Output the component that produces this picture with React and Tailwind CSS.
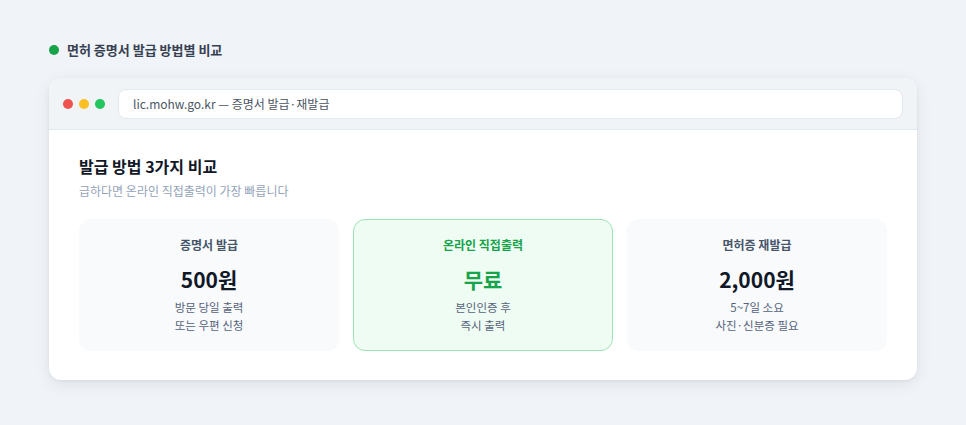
export default function App() {
  const font = { fontFamily: '"Noto Sans CJK KR", "Noto Sans", sans-serif' };
  return (
    <div className="min-h-[425px] w-[966px] bg-[#f0f3f7] px-[49px] pt-[40px] pb-[45px]" style={font}>
      <div className="flex h-[20px] items-center gap-[8px]">
        <span className="h-[10px] w-[10px] rounded-full bg-[#16a34a]" />
        <span className="text-[13px] font-bold text-[#374151]">면허 증명서 발급 방법별 비교</span>
      </div>
      <div className="mt-[18px] overflow-hidden rounded-[12px] bg-white shadow-[0_4px_16px_rgba(15,23,42,0.08),0_1px_3px_rgba(15,23,42,0.06)]">
        <div className="flex h-[52px] items-center border-b border-[#e2e8f0] bg-[#f1f4f7] pl-[14px] pr-[14px]">
          <div className="flex gap-[6px]">
            <span className="h-[10px] w-[10px] rounded-full bg-[#ef5350]" />
            <span className="h-[10px] w-[10px] rounded-full bg-[#fbbf24]" />
            <span className="h-[10px] w-[10px] rounded-full bg-[#22c55e]" />
          </div>
          <div className="ml-[13px] flex h-[30px] flex-1 items-center rounded-[8px] border border-[#e2e8f0] bg-white pl-[14px] text-[12px] text-[#4b5563]">
            lic.mohw.go.kr — 증명서 발급·재발급
          </div>
        </div>
        <div className="px-[30px] pt-[24px] pb-[29px]">
          <div className="text-[16px] font-bold leading-[24px] text-[#111827]">발급 방법 3가지 비교</div>
          <div className="mt-[4px] text-[12px] leading-[18px] text-[#94a3b8]">급하다면 온라인 직접출력이 가장 빠릅니다</div>
          <div className="mt-[19px] grid grid-cols-3 gap-[14px]">
            <div className="flex h-[132px] flex-col items-center justify-center rounded-[12px] bg-[#f8fafc]">
              <div className="text-[12px] font-semibold leading-[18px] text-[#475569]">증명서 발급</div>
              <div className="mt-[11px] text-[21px] font-bold leading-[28px] text-[#111827]">500원</div>
              <div className="mt-[5px] text-center text-[11.5px] leading-[18px] text-[#55627a]">방문 당일 출력<br />또는 우편 신청</div>
            </div>
            <div className="flex h-[132px] flex-col items-center justify-center rounded-[12px] border border-[#9de3b3] bg-[#effcf3]">
              <div className="text-[12px] font-semibold leading-[18px] text-[#16a34a]">온라인 직접출력</div>
              <div className="mt-[11px] text-[21px] font-bold leading-[28px] text-[#16a34a]">무료</div>
              <div className="mt-[5px] text-center text-[11.5px] leading-[18px] text-[#55627a]">본인인증 후<br />즉시 출력</div>
            </div>
            <div className="flex h-[132px] flex-col items-center justify-center rounded-[12px] bg-[#f8fafc]">
              <div className="text-[12px] font-semibold leading-[18px] text-[#475569]">면허증 재발급</div>
              <div className="mt-[11px] text-[21px] font-bold leading-[28px] text-[#111827]">2,000원</div>
              <div className="mt-[5px] text-center text-[11.5px] leading-[18px] text-[#55627a]">5~7일 소요<br />사진·신분증 필요</div>
            </div>
          </div>
        </div>
      </div>
    </div>
  );
}
